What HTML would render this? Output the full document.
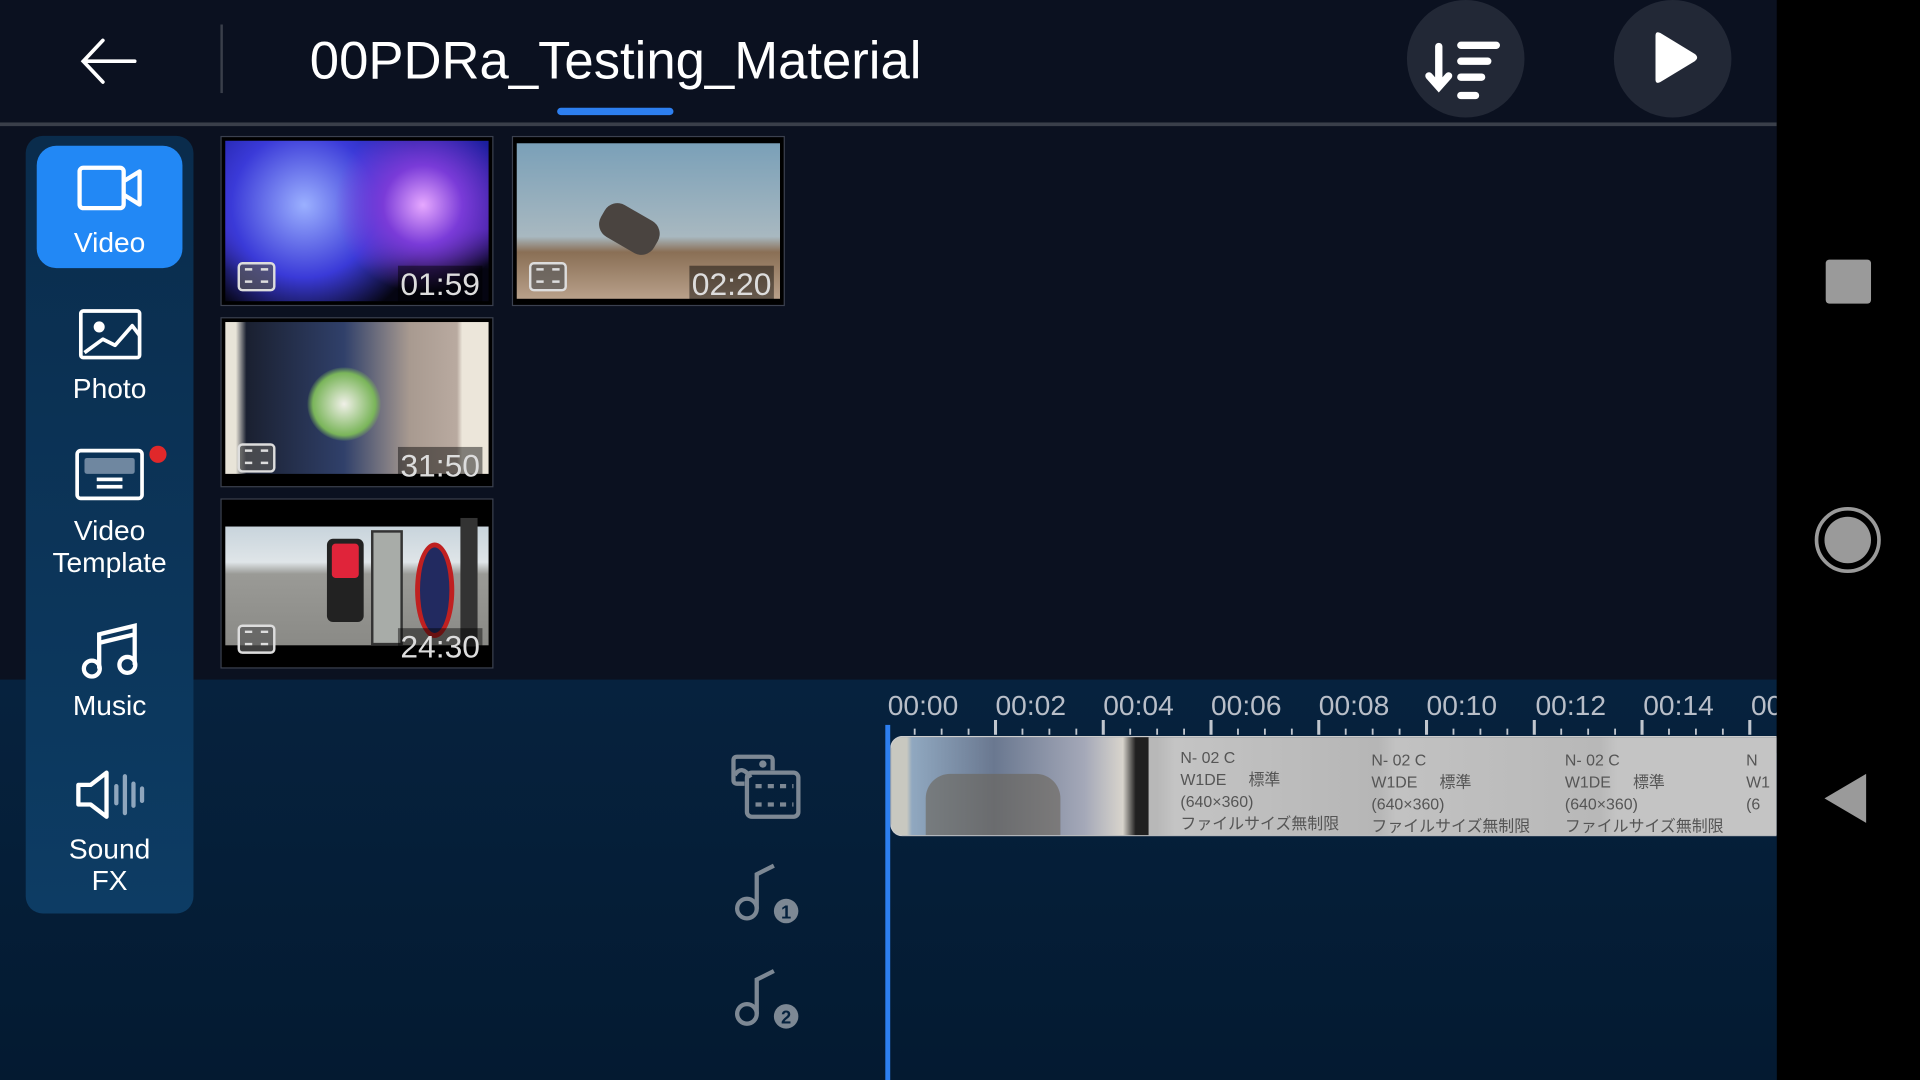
<!DOCTYPE html>
<html><head><meta charset="utf-8"><style>
html,body{margin:0;padding:0;width:1920px;height:1080px;overflow:hidden;background:#0b1120;}
#s{position:absolute;left:0;top:0;width:1568px;height:882px;transform:scale(1.22449);transform-origin:0 0;font-family:"Liberation Sans","Noto Sans CJK JP",sans-serif;color:#fff;background:#0b1120;overflow:hidden}
.a{position:absolute}
.th{position:absolute;width:221px;height:137px;border:1px solid #3b4150;background:#000;overflow:hidden}
.th .t{position:absolute;right:8px;bottom:2px;font-size:26px;color:#ddd;background:rgba(0,0,0,.45);padding:0 2px;line-height:30px;font-family:"Liberation Sans",sans-serif}
.th .f{position:absolute;left:13px;bottom:11px;width:27px;height:20px;border:2px solid #ddd;border-radius:4px;background:rgba(90,90,90,.7)}
.th .f:before,.th .f:after{content:"";position:absolute;left:4px;right:4px;height:2px;border-top:2px dashed #ddd}
.th .f:before{top:3px}.th .f:after{bottom:3px}
.lab{position:absolute;width:137px;text-align:center;font-size:23px;line-height:26px;left:21px}
.tm{position:absolute;top:563px;font-size:23px;color:#b8bec8;}
.ct{position:absolute;font-size:13px;color:#555;line-height:18px}
</style></head><body><div id="s">
<svg class="a" style="left:64px;top:30px" width="48" height="40"><path d="M46 20H4M20 3L4 20L20 37" stroke="#fff" stroke-width="3" fill="none" stroke-linecap="round"/></svg>
<div class="a" style="left:180px;top:20px;width:2px;height:56px;background:#3a3f4a"></div>
<div class="a" style="left:253px;top:24px;font-size:43px;line-height:52px">00PDRa_Testing_Material</div>
<div class="a" style="left:455px;top:88px;width:95px;height:6px;border-radius:3px;background:#2d7ff0"></div>
<div class="a" style="left:0;top:100px;width:1451px;height:3px;background:#3a3f4a"></div>
<div class="a" style="left:1149px;top:0;width:96px;height:96px;border-radius:50%;background:#222836"></div>
<svg class="a" style="left:1160px;top:30px" width="72" height="60"><g stroke="#fff" stroke-width="6" stroke-linecap="round" fill="none"><path d="M15 8V40M7 32L15 41L23 32"/><path d="M33 9H62M33 22H55M33 35H50M33 50H45" transform="translate(0,-2)"/></g></svg>
<div class="a" style="left:1318px;top:0;width:96px;height:96px;border-radius:50%;background:#222836"></div>
<svg class="a" style="left:1340px;top:22px" width="52" height="52"><path d="M12 7Q12 3 16 5L44 22Q48 25 44 28L16 45Q12 47 12 43Z" fill="#fff"/></svg>
<div class="a" style="left:1451px;top:0;width:117px;height:882px;background:#000"></div>
<div class="a" style="left:1491px;top:212px;width:37px;height:36px;border-radius:3px;background:#9a9a9a"></div>
<svg class="a" style="left:1481px;top:413px" width="56" height="56"><circle cx="28" cy="28" r="25.5" stroke="#9a9a9a" stroke-width="3" fill="none"/><circle cx="28" cy="28" r="19" fill="#9a9a9a"/></svg>
<svg class="a" style="left:1488px;top:630px" width="40" height="44"><path d="M36 2V42L2 22Z" fill="#9a9a9a"/></svg>
<div class="a" style="left:0;top:555px;width:1451px;height:327px;background:linear-gradient(#06223e,#041a31)"></div>
<div class="a" style="left:21px;top:111px;width:137px;height:635px;border-radius:14px;background:linear-gradient(#0a2c4c,#0d3c64)"></div>
<div class="a" style="left:30px;top:119px;width:119px;height:100px;border-radius:16px;background:#2288f5"></div>
<svg class="a" style="left:62px;top:134px" width="56" height="42"><g stroke="#fff" stroke-width="3.5" fill="none" stroke-linejoin="round"><rect x="3" y="3" width="36" height="33" rx="3"/><path d="M39 14L52 6V33L39 25"/></g></svg>
<div class="lab" style="top:185px">Video</div>
<svg class="a" style="left:64px;top:252px" width="52" height="42"><g stroke="#fff" stroke-width="3" fill="none"><rect x="2" y="2" width="48" height="38" rx="2"/><path d="M5 36L20 25L30 30L44 14L50 22" stroke-linejoin="round"/></g><circle cx="17" cy="15" r="4.5" fill="#fff"/></svg>
<div class="lab" style="top:304px">Photo</div>
<svg class="a" style="left:60px;top:365px" width="60" height="46"><rect x="3" y="3" width="53" height="39" rx="3" stroke="#fff" stroke-width="3" fill="none"/><rect x="9" y="9" width="41" height="13" rx="2" fill="#6f87a0"/><rect x="19" y="25" width="21" height="3" fill="#fff"/><rect x="19" y="31" width="21" height="3" fill="#fff"/></svg>
<div class="a" style="left:122px;top:364px;width:14px;height:14px;border-radius:50%;background:#e0282a"></div>
<div class="lab" style="top:420px">Video<br>Template</div>
<svg class="a" style="left:64px;top:505px" width="52" height="52"><g stroke="#fff" stroke-width="3.5" fill="none"><circle cx="11" cy="41" r="6.5"/><circle cx="40" cy="38" r="6.5"/><path d="M17 41V13L46 6V38M17 20L46 13"/></g></svg>
<div class="lab" style="top:563px">Music</div>
<svg class="a" style="left:60px;top:628px" width="60" height="42"><path d="M4 13H14L27 3V39L14 29H4Z" stroke="#fff" stroke-width="3.5" fill="none" stroke-linejoin="round"/><g stroke="#8fa6bd" stroke-width="3.5" stroke-linecap="round"><path d="M35 14V28M42 6V36M49 12V30M56 16V26"/></g></svg>
<div class="lab" style="top:680px">Sound<br>FX</div>
<div class="th" style="left:180px;top:111px"><div class="a" style="left:3px;top:3px;right:3px;bottom:3px;background:radial-gradient(circle at 75% 40%,#e6a8ff 0,#7a3bd8 18%,transparent 40%),radial-gradient(circle at 30% 40%,#9bb0ff 0,#3a3ad8 35%,transparent 60%),linear-gradient(#1b1fa0,#3b1d9c 55%,#050512 80%)"></div><div class="f"></div><div class="t">01:59</div></div>
<div class="th" style="left:418px;top:111px"><div class="a" style="left:3px;top:5px;right:3px;bottom:5px;background:linear-gradient(#7aa0b8,#a8b8c0 60%,#8a6f55 70%,#b8a08a)"></div><div class="a" style="left:70px;top:60px;width:50px;height:30px;background:#4a4440;border-radius:12px;transform:rotate(30deg)"></div><div class="f"></div><div class="t">02:20</div></div>
<div class="th" style="left:180px;top:259px"><div class="a" style="left:3px;top:3px;right:3px;bottom:10px;background:linear-gradient(90deg,#e8e4d8 0,#e8e4d8 4%,#1a2030 8%,#30406a 45%,#a89a90 70%,#b9aaa0 88%,#ece6da 90%)"></div><div class="a" style="left:70px;top:40px;width:60px;height:60px;border-radius:50%;background:radial-gradient(#f0f0e8,#7ab55a 60%,transparent 72%)"></div><div class="f"></div><div class="t">31:50</div></div>
<div class="th" style="left:180px;top:407px"><div class="a" style="left:3px;top:22px;right:3px;bottom:18px;background:linear-gradient(#c8d4dc,#dfe5e8 30%,#9a9a96 40%,#8a8a86)"></div><div class="a" style="left:86px;top:32px;width:30px;height:68px;background:#222;border-radius:5px"></div><div class="a" style="left:90px;top:36px;width:22px;height:28px;background:#e0243a;border-radius:3px"></div><div class="a" style="left:122px;top:25px;width:22px;height:90px;background:#a8aca8;border:2px solid #333"></div><div class="a" style="left:158px;top:35px;width:24px;height:70px;border-radius:50%;background:#222a60;border:4px solid #c02020"></div><div class="a" style="left:195px;top:15px;width:14px;height:105px;background:#333"></div><div class="f"></div><div class="t">24:30</div></div>
<div class="tm" style="left:725px">00:00</div>
<div class="tm" style="left:813px">00:02</div>
<div class="tm" style="left:901px">00:04</div>
<div class="tm" style="left:989px">00:06</div>
<div class="tm" style="left:1077px">00:08</div>
<div class="tm" style="left:1165px">00:10</div>
<div class="tm" style="left:1254px">00:12</div>
<div class="tm" style="left:1342px">00:14</div>
<div class="tm" style="left:1430px">00:16</div>
<div class="a" style="left:1451px;top:555px;width:117px;height:60px;background:#000"></div>
<svg class="a" style="left:720px;top:585px" width="731" height="20"><g stroke="#c0c6ce" stroke-width="1.5">
<path d="M27 10V15M49 10V15M71 10V15M115 10V15M137 10V15M159 10V15M203 10V15M225 10V15M247 10V15M291 10V15M313 10V15M335 10V15M379 10V15M401 10V15M423 10V15M467 10V15M489 10V15M511 10V15M555 10V15M577 10V15M599 10V15M643 10V15M665 10V15M687 10V15"/>
<path stroke-width="2.5" d="M93 3V15M181 3V15M269 3V15M357 3V15M445 3V15M533 3V15M621 3V15M709 3V15"/></g></svg>
<div class="a" style="left:727px;top:601px;width:724px;height:82px;border:1.5px solid #ccc;border-right:none;border-radius:10px 0 0 10px;box-sizing:border-box;overflow:hidden;background:linear-gradient(90deg,#c8c8c8 0,#b8b8b8 30%,#c4c4c4 32%,#b6b6b6 55%,#c2c2c2 57%,#b8b8b8 80%,#c4c4c4 82%)">
<div class="a" style="left:0;top:0;width:210px;height:82px;background:linear-gradient(90deg,#c8c8c0 0,#c8c8c0 6%,#90a8c0 8%,#6a7890 40%,#a4a8b8 75%,#d8d4cc 90%,#202020 95%)"></div>
<div class="a" style="left:28px;top:30px;width:110px;height:50px;background:#6a6458;opacity:.6;border-radius:20px 20px 0 0"></div>
<div class="ct" style="left:236px;top:8px">N- 02 C<br>W1DE &nbsp; &nbsp; 標準<br>(640×360)<br>ファイルサイズ無制限</div>
<div class="ct" style="left:392px;top:10px">N- 02 C<br>W1DE &nbsp; &nbsp; 標準<br>(640×360)<br>ファイルサイズ無制限</div>
<div class="ct" style="left:550px;top:10px">N- 02 C<br>W1DE &nbsp; &nbsp; 標準<br>(640×360)<br>ファイルサイズ無制限</div>
<div class="ct" style="left:698px;top:10px">N<br>W1<br>(6</div>
</div>
<div class="a" style="left:723px;top:592px;width:4px;height:290px;background:#2d7ff0"></div>
<svg class="a" style="left:596px;top:615px" width="62" height="56"><g stroke="#7d8894" stroke-width="3.5" fill="none"><path d="M12 25H6Q3 25 3 22V6Q3 3 6 3H32Q35 3 35 6V14"/><path d="M4 18Q10 9 17 20"/><rect x="14" y="16" width="42" height="36" rx="4"/></g><circle cx="27" cy="9" r="3" fill="#7d8894"/><g stroke="#7d8894" stroke-width="3.5" stroke-dasharray="5 5"><path d="M21 27H52M21 42H52"/></g></svg>
<svg class="a" style="left:596px;top:700px" width="62" height="60"><g stroke="#7d8894" stroke-width="3.5" fill="none"><circle cx="14" cy="42" r="8"/><path d="M22 42V14L36 7"/></g><circle cx="46" cy="44" r="10" fill="#7d8894"/><text x="46" y="50" font-size="15" font-weight="bold" fill="#06223e" text-anchor="middle" font-family="Liberation Sans">1</text></svg>
<svg class="a" style="left:596px;top:786px" width="62" height="60"><g stroke="#7d8894" stroke-width="3.5" fill="none"><circle cx="14" cy="42" r="8"/><path d="M22 42V14L36 7"/></g><circle cx="46" cy="44" r="10" fill="#7d8894"/><text x="46" y="50" font-size="15" font-weight="bold" fill="#06223e" text-anchor="middle" font-family="Liberation Sans">2</text></svg>
</div></body></html>
